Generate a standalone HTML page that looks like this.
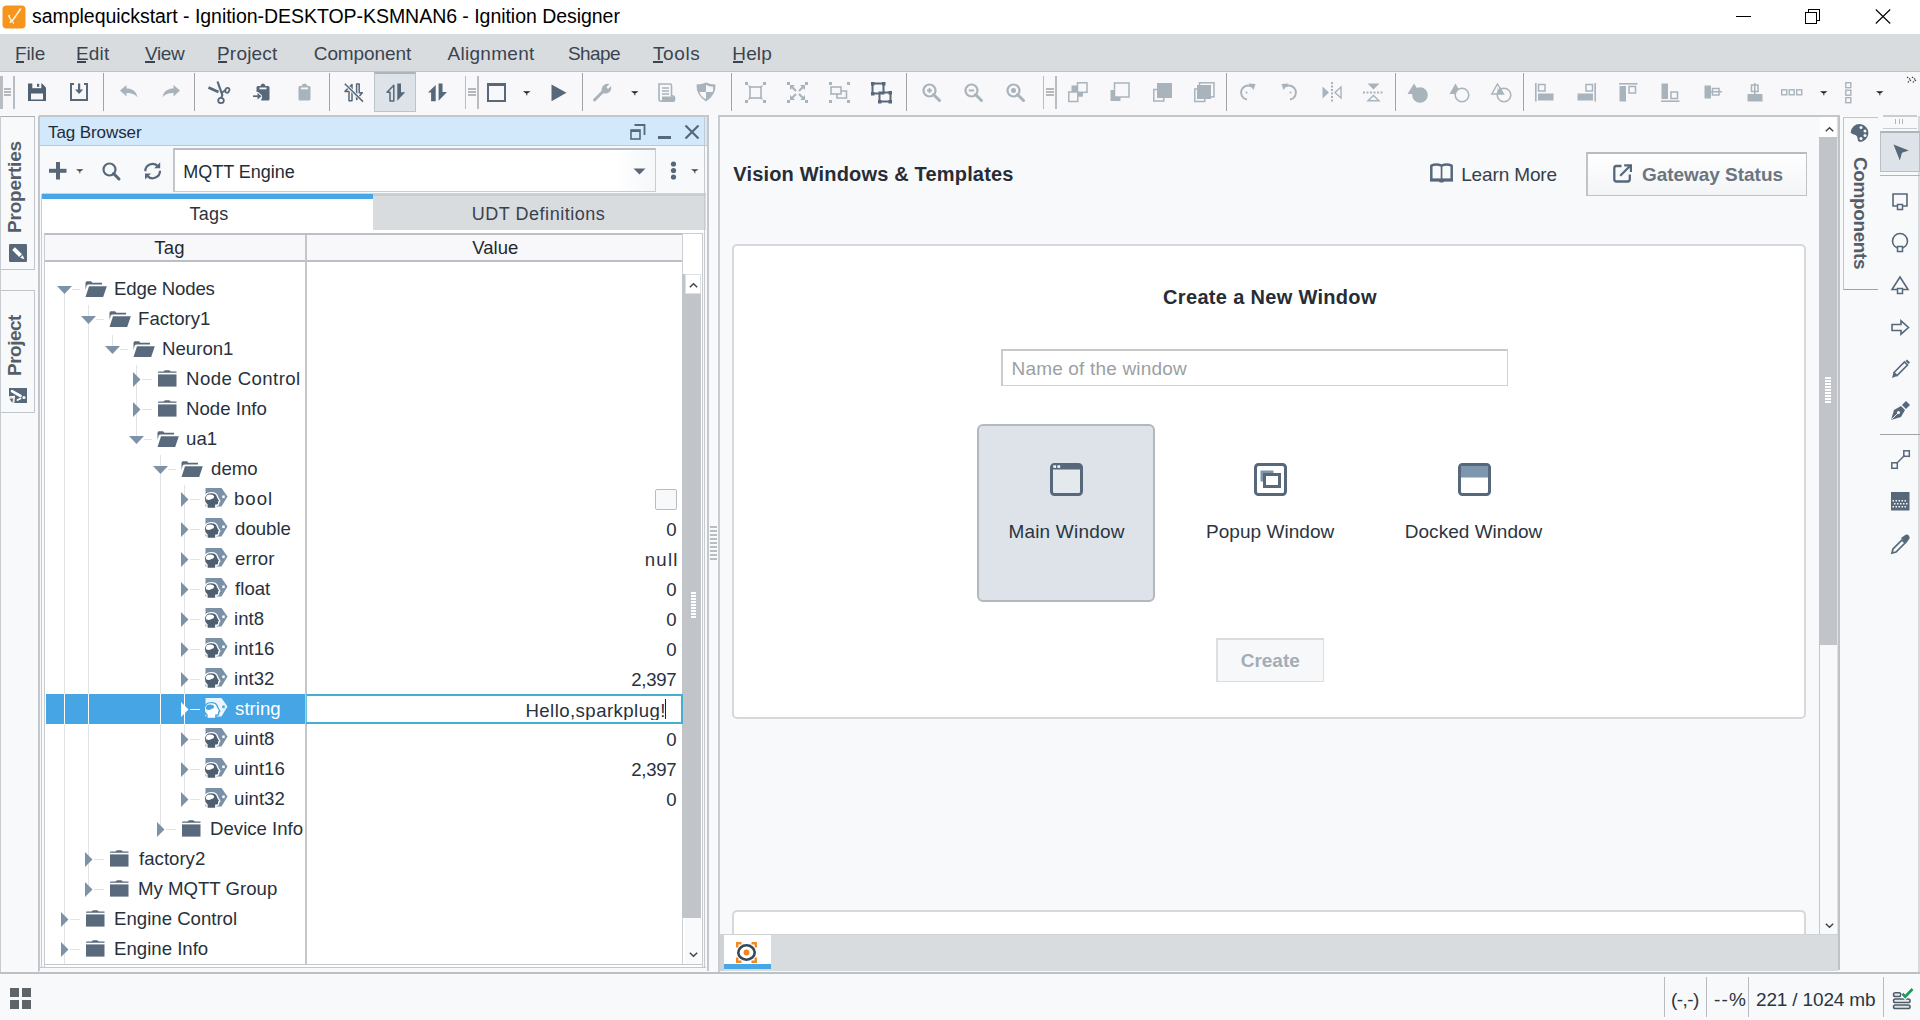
<!DOCTYPE html>
<html><head><meta charset="utf-8"><style>
html,body{margin:0;padding:0;}
body{width:1920px;height:1020px;position:relative;overflow:hidden;background:#f8f9fa;font-family:"Liberation Sans", sans-serif;}
.a{position:absolute;}
.t{white-space:pre;}
svg.a{overflow:visible;}
</style></head><body><div class="a" style="left:0px;top:0px;width:1920px;height:34px;background:#ffffff;"></div><svg class="a" style="left:2px;top:5px;" width="24" height="24" viewBox="0 0 24 24"><rect x="0.5" y="0.5" width="23" height="23" rx="4" fill="#f7941d"/><path d="M18.5 4 L10.5 15.5" stroke="#fff3d6" stroke-width="1.6" stroke-linecap="round"/><path d="M7 11.5 Q8 13.5 9.5 15.5 Q10 17 11.5 18 M9.5 15.5 L8 17.5" stroke="#fff3d6" stroke-width="1.4" fill="none" stroke-linecap="round"/><circle cx="7.2" cy="10.8" r="1" fill="#fff3d6"/></svg><div class="a t" style="left:32.00px;top:7.49px;font-size:19.5px;line-height:19.5px;color:#000000;letter-spacing:-0.038px;">samplequickstart - Ignition-DESKTOP-KSMNAN6 - Ignition Designer</div><div class="a" style="left:1736px;top:16px;width:15px;height:1px;background:#000;"></div><svg class="a" style="left:1805px;top:9px;" width="16" height="15" viewBox="0 0 16 15"><rect x="3.5" y="0.5" width="11" height="11" fill="none" stroke="#000" stroke-width="1"/><rect x="0.5" y="3.5" width="11" height="11" fill="#fff" stroke="#000" stroke-width="1"/></svg><svg class="a" style="left:1875px;top:9px;" width="16" height="15" viewBox="0 0 16 15"><path d="M0.8 0.5 L15.2 14.5 M15.2 0.5 L0.8 14.5" stroke="#000" stroke-width="1.1"/></svg><div class="a" style="left:0px;top:34px;width:1920px;height:37px;background:#d9dcdf;"></div><div class="a" style="left:0px;top:71px;width:1920px;height:2px;background:#bfc3c7;"></div><div class="a" style="left:0px;top:73px;width:1920px;height:2px;background:#fdfdfe;"></div><div class="a t" style="left:15.00px;top:43.92px;font-size:19px;line-height:19px;color:#3a4450;letter-spacing:-0.116px;">File</div><div class="a" style="left:16px;top:61px;width:8px;height:1.5px;background:#3a4450;"></div><div class="a t" style="left:76.00px;top:43.92px;font-size:19px;line-height:19px;color:#3a4450;letter-spacing:0.180px;">Edit</div><div class="a" style="left:77px;top:61px;width:9px;height:1.5px;background:#3a4450;"></div><div class="a t" style="left:145.00px;top:43.92px;font-size:19px;line-height:19px;color:#3a4450;letter-spacing:-0.373px;">View</div><div class="a" style="left:145px;top:61px;width:10px;height:1.5px;background:#3a4450;"></div><div class="a t" style="left:217.00px;top:43.92px;font-size:19px;line-height:19px;color:#3a4450;letter-spacing:0.191px;">Project</div><div class="a" style="left:218px;top:61px;width:9px;height:1.5px;background:#3a4450;"></div><div class="a t" style="left:313.75px;top:43.92px;font-size:19px;line-height:19px;color:#3a4450;letter-spacing:-0.087px;">Component</div><div class="a t" style="left:447.50px;top:43.92px;font-size:19px;line-height:19px;color:#3a4450;letter-spacing:0.286px;">Alignment</div><div class="a t" style="left:568.00px;top:43.92px;font-size:19px;line-height:19px;color:#3a4450;letter-spacing:-0.593px;">Shape</div><div class="a t" style="left:653.00px;top:43.92px;font-size:19px;line-height:19px;color:#3a4450;letter-spacing:0.599px;">Tools</div><div class="a" style="left:653px;top:61px;width:10px;height:1.5px;background:#3a4450;"></div><div class="a t" style="left:732.25px;top:43.92px;font-size:19px;line-height:19px;color:#3a4450;letter-spacing:0.164px;">Help</div><div class="a" style="left:733.25px;top:61px;width:10px;height:1.5px;background:#3a4450;"></div><div class="a" style="left:0px;top:72px;width:1920px;height:43px;background:#f8f8fa;"></div><div class="a" style="left:0px;top:75.7px;width:2.6px;height:33px;background:#b9bdc1;"></div><div class="a" style="left:3.5px;top:88px;width:7.5px;height:1.6px;background:#b4b8bc;"></div><div class="a" style="left:3.5px;top:91px;width:7.5px;height:1.6px;background:#b4b8bc;"></div><div class="a" style="left:3.5px;top:94px;width:7.5px;height:1.6px;background:#b4b8bc;"></div><div class="a" style="left:12.8px;top:75.7px;width:2px;height:33px;background:#b9bdc1;"></div><svg class="a" style="left:28px;top:83px;" width="18" height="18" viewBox="0 0 18 18"><path d="M0 0.5 H14 L18 4.5 V18 H0 Z" fill="#4f6173"/><rect x="4.3" y="0" width="9" height="5.2" fill="#f8f8fa"/><rect x="9" y="0.8" width="2.2" height="3" fill="#4f6173"/><rect x="3" y="10.5" width="12" height="6" fill="#f8f8fa"/></svg><svg class="a" style="left:70px;top:83px;" width="18" height="18" viewBox="0 0 18 18"><path d="M4 1 H1 V17 H17 V1 H14" fill="none" stroke="#56687a" stroke-width="2"/><rect x="8" y="0.5" width="2.2" height="7.5" fill="#56687a"/><path d="M5 6.5 H13.2 L9.1 11 Z" fill="#56687a"/></svg><div class="a" style="left:103px;top:73px;width:1px;height:38px;background:#9fa4a9;"></div><svg class="a" style="left:120px;top:85px;" width="18" height="13" viewBox="0 0 18 13"><path d="M0 5.5 L6.5 0 V3.5 C12 3.5 16.5 6 17.5 12.5 C15 9 11 8 6.5 8 V11.5 Z" fill="#a9b3bc"/></svg><svg class="a" style="left:161.5px;top:85px;" width="18" height="13" viewBox="0 0 18 13"><path d="M18 5.5 L11.5 0 V3.5 C6 3.5 1.5 6 0.5 12.5 C3 9 7 8 11.5 8 V11.5 Z" fill="#a9b3bc"/></svg><div class="a" style="left:194px;top:73px;width:1px;height:38px;background:#9fa4a9;"></div><svg class="a" style="left:208px;top:81px;" width="23" height="23" viewBox="0 0 23 23"><path d="M9.5 0.5 L14.5 14.5" stroke="#56687a" stroke-width="2.2"/><path d="M0.5 6.5 L10.5 11" stroke="#56687a" stroke-width="2.6"/><path d="M14.5 14 L13 17" stroke="#56687a" stroke-width="1.8"/><ellipse cx="13" cy="19.5" rx="2.8" ry="2.7" fill="none" stroke="#56687a" stroke-width="1.8"/><path d="M13.5 12 L18 8.8" stroke="#56687a" stroke-width="1.8"/><path d="M17 10 Q18 6 20.5 7 Q22.5 8.5 20.5 11 Q18.5 13 17 10 Z" fill="none" stroke="#56687a" stroke-width="1.8"/></svg><svg class="a" style="left:253px;top:83px;" width="17" height="18" viewBox="0 0 17 18"><path d="M5 3 H7.5 Q8 0.5 10 0.5 Q12 0.5 12.5 3 H15 Q16.5 3 16.5 4.5 V16 Q16.5 17.5 15 17.5 H8 L8.5 16 Q10 13.5 8 11.5 L5 9 Q4 8.5 3.5 9 V4.5 Q3.5 3 5 3 Z" fill="#56687a"/><path d="M6.5 4.5 H13.5 V6.3 H6.5 Z" fill="#f8f8fa"/><path d="M0 13.2 H5.5" stroke="#56687a" stroke-width="1.7"/><path d="M4.5 10 L8.5 13.2 L4.5 16.4 Z" fill="#56687a"/></svg><svg class="a" style="left:298px;top:83px;" width="13" height="18" viewBox="0 0 13 18"><path d="M1.5 3 H3.5 Q4 0.5 6.5 0.5 Q9 0.5 9.5 3 H11.5 Q12.5 3 12.5 4.5 V16 Q12.5 17.5 11 17.5 H2 Q0.5 17.5 0.5 16 V4.5 Q0.5 3 1.5 3 Z" fill="#a9b3bc"/><path d="M3 4.5 H10 V6.3 H3 Z" fill="#f8f8fa"/></svg><div class="a" style="left:328.5px;top:73px;width:1px;height:38px;background:#9fa4a9;"></div><svg class="a" style="left:344px;top:83px;" width="20" height="19" viewBox="0 0 20 19"><path d="M5 17.8 V8.4 H1 L8 1.5 V17.8 Z" fill="#f8f8fa" stroke="#56687a" stroke-width="1.5" stroke-linejoin="round"/><path d="M12.6 1 H15.2 V9.8 H18.3 L12.6 16.5 Z" fill="#f8f8fa" stroke="#56687a" stroke-width="1.5" stroke-linejoin="round"/><path d="M0.8 0.8 L19 18.6" stroke="#f8f8fa" stroke-width="3"/><path d="M0.8 0.8 L19 18.6" stroke="#56687a" stroke-width="1.5"/></svg><div class="a" style="left:374px;top:72px;width:42px;height:40px;background:#dde3e8;box-sizing:border-box;border:1px solid #bcc4cb;border-top:2px solid #adb5bc;"></div><svg class="a" style="left:386px;top:83px;" width="20" height="19" viewBox="0 0 20 19"><path d="M4 18 V9.3 H1 L7.8 2.2 V18 Z" fill="#dde3e8" stroke="#56687a" stroke-width="1.5" stroke-linejoin="round"/><path d="M11.3 0.4 H15 V9.2 H19.2 L11.3 17.8 Z" fill="#56687a"/></svg><svg class="a" style="left:428px;top:83px;" width="20" height="19" viewBox="0 0 20 19"><path d="M3.1 18.2 V9.5 H0 L7.7 1.9 V18.2 Z" fill="#56687a"/><path d="M10.6 0.4 H14.5 V9 H19 L10.6 17.8 Z" fill="#56687a"/></svg><div class="a" style="left:464.5px;top:75.5px;width:1.5px;height:33px;background:#b9bdc1;"></div><div class="a" style="left:468.0px;top:88px;width:7.5px;height:1.6px;background:#b4b8bc;"></div><div class="a" style="left:468.0px;top:91px;width:7.5px;height:1.6px;background:#b4b8bc;"></div><div class="a" style="left:468.0px;top:94px;width:7.5px;height:1.6px;background:#b4b8bc;"></div><div class="a" style="left:477.3px;top:75.7px;width:2px;height:33px;background:#b9bdc1;"></div><svg class="a" style="left:487px;top:83px;" width="19" height="19" viewBox="0 0 19 19"><rect x="1" y="1" width="17" height="17" fill="none" stroke="#56687a" stroke-width="2"/><rect x="1" y="1" width="17" height="2" fill="#56687a"/></svg><svg class="a" style="left:523px;top:91px;" width="8" height="5" viewBox="0 0 8 5"><path d="M0 0.2 H7.5 L3.75 3 Z" fill="#222"/><rect x="3.2" y="3" width="1.2" height="1.3" fill="#555"/></svg><svg class="a" style="left:551px;top:84px;" width="16" height="18" viewBox="0 0 16 18"><path d="M0.5 0.5 L15.5 8.8 L0.5 17.2 Z" fill="#56687a"/></svg><div class="a" style="left:581.5px;top:73px;width:1px;height:38px;background:#9fa4a9;"></div><svg class="a" style="left:593px;top:83px;" width="19" height="19" viewBox="0 0 19 19"><path d="M1.5 17 L10 8.5" stroke="#a9b3bc" stroke-width="3" stroke-linecap="round"/><path d="M9 9.5 Q7.5 5 11 2 Q13.5 0 16.5 1 L13.5 4 L15 6 L18 3 Q19 6.5 16.5 9 Q13.5 11.5 10 10 Z" fill="#a9b3bc"/></svg><svg class="a" style="left:630.5px;top:91px;" width="8" height="5" viewBox="0 0 8 5"><path d="M0 0.2 H7.5 L3.75 3 Z" fill="#222"/><rect x="3.2" y="3" width="1.2" height="1.3" fill="#555"/></svg><svg class="a" style="left:657px;top:83px;" width="18" height="19" viewBox="0 0 18 19"><path d="M2 1 H13 Q14.5 1 14.5 2.5 V13 H16.5 Q17.5 13 17.5 15 V17 Q17.5 18.2 16 18.2 H4 Q2 18.2 2 16 V1 Z" fill="none" stroke="#a9b3bc" stroke-width="1.6"/><path d="M5 5 H12 M5 8 H12 M5 11 H12" stroke="#a9b3bc" stroke-width="1.5"/><path d="M5 13.5 H17.5 V17 Q17.5 18.2 16 18.2 H5 Z" fill="#a9b3bc"/></svg><svg class="a" style="left:696px;top:82px;" width="20" height="20" viewBox="0 0 20 20"><path d="M10 0.5 Q14 2.5 19.5 2.5 Q20 13 10 19.5 Q0 13 0.5 2.5 Q6 2.5 10 0.5 Z" fill="#a9b3bc"/><path d="M10 3 Q13.5 4.5 17 4.7 Q17.5 8.3 16.6 10 H10 Z" fill="#f8f8fa"/><path d="M10 10 H3.4 Q5 14.8 10 17.2 Z" fill="#f8f8fa"/></svg><div class="a" style="left:730.5px;top:73px;width:1px;height:38px;background:#9fa4a9;"></div><svg class="a" style="left:745px;top:82px;" width="21" height="21" viewBox="0 0 21 21"><rect x="0" y="0" width="3" height="3" fill="#a9b3bc"/><rect x="0" y="18" width="3" height="3" fill="#a9b3bc"/><rect x="18" y="0" width="3" height="3" fill="#a9b3bc"/><rect x="18" y="18" width="3" height="3" fill="#a9b3bc"/><rect x="5" y="5" width="11" height="11" fill="none" stroke="#a9b3bc" stroke-width="1.6"/><path d="M3.5 3.5 L5.5 5.5 M17.5 3.5 L15.5 5.5 M3.5 17.5 L5.5 15.5 M17.5 17.5 L15.5 15.5" stroke="#a9b3bc" stroke-width="1.2"/></svg><svg class="a" style="left:787px;top:82px;" width="21" height="21" viewBox="0 0 21 21"><rect x="0" y="0" width="3" height="3" fill="#a9b3bc"/><rect x="0" y="18" width="3" height="3" fill="#a9b3bc"/><rect x="18" y="0" width="3" height="3" fill="#a9b3bc"/><rect x="18" y="18" width="3" height="3" fill="#a9b3bc"/><path d="M4 4 L9 9 M17 4 L12 9 M4 17 L9 12 M17 17 L12 12" stroke="#a9b3bc" stroke-width="2"/><path d="M3 3 H8 L3 8 Z M18 3 H13 L18 8 Z M3 18 H8 L3 13 Z M18 18 H13 L18 13 Z" fill="#a9b3bc"/></svg><svg class="a" style="left:829px;top:82px;" width="21" height="21" viewBox="0 0 21 21"><rect x="0" y="0" width="3" height="3" fill="#a9b3bc"/><rect x="0" y="18" width="3" height="3" fill="#a9b3bc"/><rect x="18" y="0" width="3" height="3" fill="#a9b3bc"/><rect x="18" y="18" width="3" height="3" fill="#a9b3bc"/><rect x="2" y="5" width="10" height="7" fill="none" stroke="#a9b3bc" stroke-width="1.6"/><path d="M12 9 H17.5 V16 H8 V12" fill="none" stroke="#a9b3bc" stroke-width="1.6"/></svg><svg class="a" style="left:871px;top:82px;" width="21" height="21" viewBox="0 0 21 21"><rect x="1.5" y="1.5" width="11" height="10" fill="none" stroke="#56687a" stroke-width="2"/><rect x="8.5" y="10.5" width="11" height="9" fill="none" stroke="#56687a" stroke-width="2"/><rect x="0" y="0" width="3.5" height="3.5" fill="#56687a"/><rect x="11" y="0" width="3.5" height="3.5" fill="#56687a"/><rect x="0" y="10" width="3.5" height="3.5" fill="#56687a"/><rect x="7" y="18" width="3.5" height="3.5" fill="#56687a"/><rect x="17.5" y="9" width="3.5" height="3.5" fill="#56687a"/><rect x="17.5" y="18" width="3.5" height="3.5" fill="#56687a"/></svg><div class="a" style="left:905.5px;top:73px;width:1px;height:38px;background:#9fa4a9;"></div><svg class="a" style="left:922px;top:83px;" width="19" height="19" viewBox="0 0 19 19"><circle cx="7.5" cy="7.5" r="6" fill="none" stroke="#a9b3bc" stroke-width="2.2"/><path d="M11.5 11.5 L17.5 17.5" stroke="#a9b3bc" stroke-width="3" stroke-linecap="round"/><path d="M5 7.5 H10 M7.5 5 V10" stroke="#a9b3bc" stroke-width="1.8"/></svg><svg class="a" style="left:964px;top:83px;" width="19" height="19" viewBox="0 0 19 19"><circle cx="7.5" cy="7.5" r="6" fill="none" stroke="#a9b3bc" stroke-width="2.2"/><path d="M11.5 11.5 L17.5 17.5" stroke="#a9b3bc" stroke-width="3" stroke-linecap="round"/><path d="M4.8 7.5 H10.2" stroke="#a9b3bc" stroke-width="2"/></svg><svg class="a" style="left:1006px;top:83px;" width="19" height="19" viewBox="0 0 19 19"><circle cx="7.5" cy="7.5" r="6" fill="none" stroke="#a9b3bc" stroke-width="2.2"/><path d="M11.5 11.5 L17.5 17.5" stroke="#a9b3bc" stroke-width="3" stroke-linecap="round"/><circle cx="7.5" cy="7.5" r="2.5" fill="#a9b3bc"/></svg><div class="a" style="left:1042.5px;top:75.5px;width:1.5px;height:33px;background:#b9bdc1;"></div><div class="a" style="left:1046.0px;top:88px;width:7.5px;height:1.6px;background:#b4b8bc;"></div><div class="a" style="left:1046.0px;top:91px;width:7.5px;height:1.6px;background:#b4b8bc;"></div><div class="a" style="left:1046.0px;top:94px;width:7.5px;height:1.6px;background:#b4b8bc;"></div><div class="a" style="left:1055.3px;top:75.7px;width:2px;height:33px;background:#b9bdc1;"></div><svg class="a" style="left:1068px;top:82px;" width="21" height="21" viewBox="0 0 21 21"><rect x="3.5" y="3.5" width="11" height="11" fill="#a9b3bc"/><rect x="9.5" y="0.8" width="9.5" height="9.5" fill="#f8f8fa" stroke="#a9b3bc" stroke-width="1.5"/><rect x="0.8" y="10" width="9" height="9.5" fill="#f8f8fa" stroke="#a9b3bc" stroke-width="1.5"/><rect x="10" y="10.5" width="5" height="4" fill="#a9b3bc"/></svg><svg class="a" style="left:1110px;top:82px;" width="20" height="21" viewBox="0 0 20 21"><rect x="0.5" y="8" width="10" height="11" fill="#a9b3bc"/><rect x="4.5" y="1" width="14.5" height="14" fill="#f8f8fa" stroke="#a9b3bc" stroke-width="1.5"/></svg><svg class="a" style="left:1153px;top:82px;" width="19" height="21" viewBox="0 0 19 21"><rect x="0.8" y="7.5" width="10" height="11.5" fill="#f8f8fa" stroke="#a9b3bc" stroke-width="1.5"/><rect x="4" y="1" width="15" height="15" fill="#a9b3bc"/></svg><svg class="a" style="left:1194px;top:82px;" width="21" height="21" viewBox="0 0 21 21"><rect x="5.5" y="0.8" width="14.5" height="14" fill="#f8f8fa" stroke="#a9b3bc" stroke-width="1.5"/><rect x="0.8" y="7" width="10" height="12.5" fill="#f8f8fa" stroke="#a9b3bc" stroke-width="1.5"/><rect x="3" y="3" width="14" height="14" fill="#a9b3bc"/></svg><div class="a" style="left:1225.5px;top:73px;width:1px;height:38px;background:#9fa4a9;"></div><svg class="a" style="left:1238px;top:83px;" width="18" height="19" viewBox="0 0 18 19"><path d="M13.5 3.5 A7 7 0 1 0 9 16.5" fill="none" stroke="#a9b3bc" stroke-width="2"/><path d="M10.5 0.5 L17.5 1 L15.5 7 Z" fill="#a9b3bc"/><circle cx="8.5" cy="9.5" r="1" fill="#a9b3bc"/></svg><svg class="a" style="left:1281px;top:83px;" width="18" height="19" viewBox="0 0 18 19"><path d="M4.5 3.5 A7 7 0 1 1 9 16.5" fill="none" stroke="#a9b3bc" stroke-width="2"/><path d="M7.5 0.5 L0.5 1 L2.5 7 Z" fill="#a9b3bc"/><circle cx="9.5" cy="9.5" r="1" fill="#a9b3bc"/></svg><svg class="a" style="left:1322px;top:82px;" width="20" height="21" viewBox="0 0 20 21"><path d="M0.5 4.5 L7 10.5 L0.5 16.5 Z" fill="#a9b3bc"/><path d="M19 5 L13 10.5 L19 16 Z" fill="none" stroke="#a9b3bc" stroke-width="1.4"/><rect x="9" y="0" width="2" height="2" fill="#a9b3bc"/><rect x="9" y="3.5" width="2" height="2" fill="#a9b3bc"/><rect x="9" y="7" width="2" height="2" fill="#a9b3bc"/><rect x="9" y="10.5" width="2" height="2" fill="#a9b3bc"/><rect x="9" y="14" width="2" height="2" fill="#a9b3bc"/><rect x="9" y="17.5" width="2" height="2" fill="#a9b3bc"/></svg><svg class="a" style="left:1363px;top:83px;" width="21" height="19" viewBox="0 0 21 19"><path d="M4.5 0.5 L10.5 6.5 L16.5 0.5 Z" fill="#a9b3bc"/><path d="M5 17.8 L10.5 12.5 L16 17.8 Z" fill="none" stroke="#a9b3bc" stroke-width="1.4"/><rect x="0" y="8.5" width="2" height="2" fill="#a9b3bc"/><rect x="3.5" y="8.5" width="2" height="2" fill="#a9b3bc"/><rect x="7" y="8.5" width="2" height="2" fill="#a9b3bc"/><rect x="10.5" y="8.5" width="2" height="2" fill="#a9b3bc"/><rect x="14" y="8.5" width="2" height="2" fill="#a9b3bc"/><rect x="17.5" y="8.5" width="2" height="2" fill="#a9b3bc"/></svg><div class="a" style="left:1394.5px;top:73px;width:1px;height:38px;background:#9fa4a9;"></div><svg class="a" style="left:1407px;top:83px;" width="22" height="21" viewBox="0 0 22 21"><path d="M7 0.5 L13.5 11 H0.5 Z" fill="#a9b3bc"/><circle cx="13" cy="12" r="7.8" fill="#a9b3bc"/></svg><svg class="a" style="left:1449px;top:83px;" width="21" height="21" viewBox="0 0 21 21"><path d="M6.5 0.5 L12.5 11 H0.5 Z" fill="#a9b3bc"/><circle cx="13" cy="12" r="6.8" fill="#f8f8fa" stroke="#a9b3bc" stroke-width="1.5"/></svg><svg class="a" style="left:1491px;top:83px;" width="21" height="21" viewBox="0 0 21 21"><path d="M6.5 1 L12.5 11 H0.8 Z" fill="none" stroke="#a9b3bc" stroke-width="1.4"/><circle cx="13" cy="12" r="6.8" fill="none" stroke="#a9b3bc" stroke-width="1.5"/><path d="M6.5 5 L11.5 11 H6.5 Z" fill="#a9b3bc"/><path d="M9 3.5 L12.5 11 H6.3 Z" fill="#a9b3bc"/></svg><div class="a" style="left:1522.5px;top:73px;width:1px;height:38px;background:#9fa4a9;"></div><svg class="a" style="left:1535px;top:83px;" width="19" height="19" viewBox="0 0 19 19"><rect x="0" y="0" width="1.6" height="18.5" fill="#a9b3bc"/><rect x="3.5" y="1.5" width="6.5" height="6.5" fill="none" stroke="#a9b3bc" stroke-width="1.5"/><rect x="3" y="10.5" width="15.5" height="7" fill="#a9b3bc"/></svg><svg class="a" style="left:1577px;top:83px;" width="19" height="19" viewBox="0 0 19 19"><rect x="17.4" y="0" width="1.6" height="18.5" fill="#a9b3bc"/><rect x="9" y="1.5" width="6.5" height="6.5" fill="none" stroke="#a9b3bc" stroke-width="1.5"/><rect x="0.5" y="10.5" width="15.5" height="7" fill="#a9b3bc"/></svg><svg class="a" style="left:1619px;top:83px;" width="19" height="19" viewBox="0 0 19 19"><rect x="0" y="0" width="18.5" height="1.6" fill="#a9b3bc"/><rect x="0.5" y="3" width="6.5" height="15.5" fill="#a9b3bc"/><rect x="10" y="3.5" width="6.5" height="6.5" fill="none" stroke="#a9b3bc" stroke-width="1.5"/></svg><svg class="a" style="left:1661px;top:83px;" width="19" height="19" viewBox="0 0 19 19"><rect x="0" y="17.4" width="18.5" height="1.6" fill="#a9b3bc"/><rect x="0.5" y="0.5" width="6.5" height="15.5" fill="#a9b3bc"/><rect x="10" y="9" width="6.5" height="6.5" fill="none" stroke="#a9b3bc" stroke-width="1.5"/></svg><svg class="a" style="left:1704px;top:85px;" width="18" height="14" viewBox="0 0 18 14"><rect x="0.5" y="0.5" width="6.5" height="13" fill="#a9b3bc"/><rect x="8.5" y="3.5" width="6.5" height="6.5" fill="none" stroke="#a9b3bc" stroke-width="1.5"/><rect x="7" y="6" width="11" height="1.5" fill="#a9b3bc"/></svg><svg class="a" style="left:1747px;top:83px;" width="16" height="19" viewBox="0 0 16 19"><rect x="0.5" y="11" width="15" height="7.5" fill="#a9b3bc"/><rect x="4.5" y="2" width="6.5" height="6.5" fill="none" stroke="#a9b3bc" stroke-width="1.5"/><rect x="7" y="0" width="1.5" height="11" fill="#a9b3bc"/></svg><svg class="a" style="left:1781px;top:89px;" width="22" height="7" viewBox="0 0 22 7"><rect x="0.7" y="0.8" width="5" height="5" fill="none" stroke="#a9b3bc" stroke-width="1.4"/><rect x="8.2" y="0.8" width="5" height="5" fill="none" stroke="#a9b3bc" stroke-width="1.4"/><rect x="15.7" y="0.8" width="5" height="5" fill="none" stroke="#a9b3bc" stroke-width="1.4"/></svg><svg class="a" style="left:1819.5px;top:91px;" width="8" height="5" viewBox="0 0 8 5"><path d="M0 0.2 H7.5 L3.75 3 Z" fill="#222"/><rect x="3.2" y="3" width="1.2" height="1.3" fill="#555"/></svg><svg class="a" style="left:1845px;top:82px;" width="8" height="22" viewBox="0 0 8 22"><rect x="0.8" y="0.7" width="5" height="5" fill="none" stroke="#a9b3bc" stroke-width="1.4"/><rect x="0.8" y="8.2" width="5" height="5" fill="none" stroke="#a9b3bc" stroke-width="1.4"/><rect x="0.8" y="15.7" width="5" height="5" fill="none" stroke="#a9b3bc" stroke-width="1.4"/></svg><svg class="a" style="left:1876px;top:91px;" width="8" height="5" viewBox="0 0 8 5"><path d="M0 0.2 H7.5 L3.75 3 Z" fill="#222"/><rect x="3.2" y="3" width="1.2" height="1.3" fill="#555"/></svg><svg class="a" style="left:1906px;top:76px;" width="13" height="9" viewBox="0 0 13 9"><path d="M1 1 L5 4 L1 7 M6 1 L10 4 L6 7" fill="none" stroke="#333" stroke-width="1.1" stroke-dasharray="1.5 1"/></svg><div class="a" style="left:0px;top:116px;width:1px;height:858px;background:#c8ccd0;"></div><div class="a" style="left:1px;top:116px;width:34px;height:154px;background:#f8f9fa;box-sizing:border-box;border:1px solid #c2c6ca;border-left:none;border-top-color:#a9aeb3;"></div><div class="a t" style="transform-origin:0 0;transform:rotate(-90deg);left:5.22px;top:233.20px;font-size:19px;line-height:19px;color:#555e68;font-weight:bold;letter-spacing:-0.213px;">Properties</div><svg class="a" style="left:8.5px;top:244px;" width="18" height="18" viewBox="0 0 18 18"><rect x="0" y="0" width="18" height="18" rx="1.2" fill="#56687a"/><path d="M3.2 6 L6 3.2 L13 10.2 L10.2 13 Z" fill="#ffffff"/><path d="M11.2 13.8 L13.8 11.2 L15.3 15.3 Z" fill="#ffffff"/></svg><div class="a" style="left:1px;top:290px;width:34px;height:123px;background:#f8f9fa;box-sizing:border-box;border:1px solid #c2c6ca;border-left:none;"></div><div class="a t" style="transform-origin:0 0;transform:rotate(-90deg);left:5.22px;top:375.50px;font-size:19px;line-height:19px;color:#555e68;font-weight:bold;letter-spacing:-0.514px;">Project</div><svg class="a" style="left:8.5px;top:388px;" width="18" height="15" viewBox="0 0 18 15"><path d="M0 0 H18 V15 H4.2 L5 9 L0 9.5 Z" fill="#56687a"/><path d="M0.5 10.8 L4 10.6 L3.4 15 Z" fill="#56687a"/><path d="M0 9 L5.3 8.6 L4.6 15" fill="none" stroke="#f8f9fa" stroke-width="1.4"/><path d="M3 3.2 L11.5 8" stroke="#ffffff" stroke-width="2.6" stroke-linecap="round"/><circle cx="15" cy="9.5" r="1.6" fill="#ffffff"/><path d="M8.5 12 L11.5 10.5" stroke="#ffffff" stroke-width="1.8" stroke-linecap="round"/></svg><div class="a" style="left:38px;top:116px;width:1px;height:858px;background:#c3c7cb;"></div><div class="a" style="left:39px;top:115px;width:670px;height:856px;background:#f8f9fa;box-sizing:border-box;border:1px solid #c4c8cc;border-top:2px solid #c3c6ca;border-right:2px solid #c4c8cc;border-bottom:none;"></div><div class="a" style="left:40px;top:117px;width:667px;height:28px;background:#d2e9fb;"></div><div class="a" style="left:40px;top:145px;width:667px;height:1px;background:#bfc7cf;"></div><div class="a t" style="left:48.10px;top:124.11px;font-size:17px;line-height:17px;color:#1f2b3a;letter-spacing:-0.102px;">Tag Browser</div><svg class="a" style="left:630px;top:124px;" width="16" height="16" viewBox="0 0 16 16"><rect x="1" y="6" width="9" height="9" fill="none" stroke="#56687a" stroke-width="1.6"/><rect x="1" y="6" width="9" height="2" fill="#56687a"/><path d="M4.5 1 H14.5 V11" fill="none" stroke="#56687a" stroke-width="1.8"/></svg><div class="a" style="left:658px;top:136px;width:12.5px;height:3px;background:#56687a;"></div><svg class="a" style="left:684px;top:124px;" width="16" height="16" viewBox="0 0 16 16"><path d="M1.5 1.5 L14.5 14.5 M14.5 1.5 L1.5 14.5" stroke="#56687a" stroke-width="2.2"/></svg><div class="a" style="left:173.2px;top:147.8px;width:482.5px;height:44.5px;background:#ffffff;box-sizing:border-box;border:1px solid #c9ccd0;border-top:2px solid #b9bdc1;border-left:2px solid #c2c6ca;"></div><div class="a" style="left:615px;top:149.8px;width:39.5px;height:41.2px;background:linear-gradient(90deg,#ffffff,#f5f7f9);"></div><svg class="a" style="left:49px;top:161.5px;" width="18" height="18" viewBox="0 0 18 18"><rect x="7" y="0" width="4" height="17.5" fill="#56687a"/><rect x="0" y="6.8" width="17.5" height="4" fill="#56687a"/></svg><svg class="a" style="left:76px;top:168.5px;" width="8" height="5" viewBox="0 0 8 5"><path d="M0 0.2 H7.5 L3.75 3 Z" fill="#444"/><rect x="3.2" y="3" width="1.2" height="1.3" fill="#666"/></svg><svg class="a" style="left:102px;top:162px;" width="19" height="19" viewBox="0 0 19 19"><circle cx="7.5" cy="7.5" r="6" fill="none" stroke="#56687a" stroke-width="2.2"/><path d="M11.5 11.5 L17 17" stroke="#56687a" stroke-width="3" stroke-linecap="round"/></svg><svg class="a" style="left:144px;top:162px;" width="18" height="18" viewBox="0 0 18 18"><path d="M1.3 9.2 A7.3 7.3 0 0 1 13.6 3.9" fill="none" stroke="#56687a" stroke-width="2.2"/><path d="M16.2 0.2 V6.2 H10.2 Z" fill="#56687a"/><path d="M16 8.8 A7.3 7.3 0 0 1 3.6 14.1" fill="none" stroke="#56687a" stroke-width="2.2"/><path d="M1 17.6 V11.6 H7 Z" fill="#56687a"/></svg><svg class="a" style="left:633px;top:168px;" width="13" height="7" viewBox="0 0 13 7"><path d="M0.5 0.5 H12.5 L6.5 6.5 Z" fill="#56687a"/></svg><svg class="a" style="left:670px;top:160.5px;" width="7" height="19" viewBox="0 0 7 19"><circle cx="3.5" cy="3" r="2.6" fill="#56687a"/><circle cx="3.5" cy="9.5" r="2.6" fill="#56687a"/><circle cx="3.5" cy="16" r="2.6" fill="#56687a"/></svg><svg class="a" style="left:691px;top:168.5px;" width="8" height="5" viewBox="0 0 8 5"><path d="M0 0.2 H7.5 L3.75 3 Z" fill="#444"/><rect x="3.2" y="3" width="1.2" height="1.3" fill="#666"/></svg><div class="a t" style="left:183.20px;top:162.66px;font-size:18px;line-height:18px;color:#222c38;letter-spacing:-0.012px;">MQTT Engine</div><div class="a" style="left:42px;top:193px;width:664px;height:1px;background:#d0d3d6;"></div><div class="a" style="left:42px;top:194px;width:331px;height:4.5px;background:#46a6e6;"></div><div class="a" style="left:42px;top:198.5px;width:331px;height:31.5px;background:#ffffff;"></div><div class="a" style="left:373px;top:194px;width:333px;height:36px;background:#d9dcdf;box-sizing:border-box;border-top:2px solid #c9ccd0;"></div><div class="a" style="left:41px;top:194px;width:1px;height:774px;background:#c9ccd0;"></div><div class="a" style="left:42px;top:230px;width:664px;height:3px;background:#ffffff;"></div><div class="a t" style="left:189.40px;top:204.56px;font-size:18px;line-height:18px;color:#2c3540;letter-spacing:0.293px;">Tags</div><div class="a t" style="left:471.80px;top:204.76px;font-size:18px;line-height:18px;color:#38424d;letter-spacing:0.519px;">UDT Definitions</div><div class="a" style="left:44px;top:233px;width:659px;height:735px;background:#ffffff;box-sizing:border-box;border:1px solid #c9ccd0;"></div><div class="a" style="left:45px;top:233px;width:637px;height:2px;background:#bcc0c4;"></div><div class="a" style="left:45px;top:235px;width:637px;height:25px;background:#f8f8fa;"></div><div class="a" style="left:45px;top:260px;width:637px;height:2px;background:#bcc0c4;"></div><div class="a" style="left:305px;top:235px;width:2px;height:729px;background:#c3c7cb;"></div><div class="a t" style="left:154.20px;top:239.34px;font-size:18.5px;line-height:18.5px;color:#1f2933;letter-spacing:0.231px;">Tag</div><div class="a t" style="left:472.30px;top:239.34px;font-size:18.5px;line-height:18.5px;color:#1f2933;letter-spacing:0.011px;">Value</div><div class="a" style="left:682px;top:235px;width:20px;height:39px;background:#ffffff;"></div><div class="a" style="left:682px;top:234px;width:1px;height:730px;background:#cdd0d3;"></div><div class="a" style="left:682px;top:274px;width:3px;height:20px;background:#c1c5c9;"></div><div class="a" style="left:682px;top:293.5px;width:19px;height:624px;background:#c1c5c9;"></div><div class="a" style="left:685px;top:274px;width:16px;height:19.5px;background:#ffffff;box-sizing:border-box;border:1px solid #dde0e3;"></div><svg class="a" style="left:688.5px;top:283px;" width="9" height="5" viewBox="0 0 9 5"><path d="M0.8 4.2 L4.5 0.8 L8.2 4.2" fill="none" stroke="#444" stroke-width="1.5"/></svg><div class="a" style="left:685px;top:917.5px;width:16px;height:46.5px;background:#f9fafb;"></div><svg class="a" style="left:688.5px;top:952px;" width="9" height="5" viewBox="0 0 9 5"><path d="M0.8 0.8 L4.5 4.2 L8.2 0.8" fill="none" stroke="#444" stroke-width="1.5"/></svg><div class="a" style="left:690.5px;top:592px;width:5.5px;height:1.6px;background:#ffffff;"></div><div class="a" style="left:690.5px;top:595px;width:5.5px;height:1.6px;background:#ffffff;"></div><div class="a" style="left:690.5px;top:598px;width:5.5px;height:1.6px;background:#ffffff;"></div><div class="a" style="left:690.5px;top:601px;width:5.5px;height:1.6px;background:#ffffff;"></div><div class="a" style="left:690.5px;top:604px;width:5.5px;height:1.6px;background:#ffffff;"></div><div class="a" style="left:690.5px;top:607px;width:5.5px;height:1.6px;background:#ffffff;"></div><div class="a" style="left:690.5px;top:610px;width:5.5px;height:1.6px;background:#ffffff;"></div><div class="a" style="left:690.5px;top:613px;width:5.5px;height:1.6px;background:#ffffff;"></div><div class="a" style="left:690.5px;top:616px;width:5.5px;height:1.6px;background:#ffffff;"></div><div class="a" style="left:701.5px;top:235px;width:1px;height:730px;background:#c7cbcf;"></div><div class="a" style="left:704px;top:116px;width:1px;height:852px;background:#c7cbcf;"></div><div class="a" style="left:45px;top:964px;width:657px;height:1px;background:#c3c7cb;"></div><div class="a" style="left:40px;top:967px;width:666px;height:1px;background:#c3c7cb;"></div><div class="a" style="left:46px;top:694px;width:259px;height:29.5px;background:#45a5e5;"></div><div class="a" style="left:64.0px;top:289.5px;width:1px;height:674.5px;background:#e1e4e7;"></div><div class="a" style="left:64.0px;top:694px;width:1px;height:29.5px;background:#ffffff;"></div><div class="a" style="left:88.0px;top:304.5px;width:1px;height:585.0px;background:#e1e4e7;"></div><div class="a" style="left:88.0px;top:694px;width:1px;height:29.5px;background:#ffffff;"></div><div class="a" style="left:112.0px;top:334.5px;width:1px;height:15.0px;background:#e1e4e7;"></div><div class="a" style="left:136.0px;top:364.5px;width:1px;height:75.0px;background:#e1e4e7;"></div><div class="a" style="left:160.0px;top:454.5px;width:1px;height:375.0px;background:#e1e4e7;"></div><div class="a" style="left:160.0px;top:694px;width:1px;height:29.5px;background:#ffffff;"></div><div class="a" style="left:184.0px;top:484.5px;width:1px;height:315.0px;background:#e1e4e7;"></div><div class="a" style="left:184.0px;top:694px;width:1px;height:29.5px;background:#ffffff;"></div><div class="a" style="left:72.0px;top:289.0px;width:8px;height:1px;background:#e1e4e7;"></div><svg class="a" style="left:57.0px;top:285.5px;" width="15" height="8" viewBox="0 0 15 8"><path d="M0 0 H15 L7.5 8 Z" fill="#7d92a7"/></svg><svg class="a" style="left:84.8px;top:280.6px;" width="22" height="16" viewBox="0 0 22 16"><path d="M0.5 2 Q0.5 0.3 2 0.3 H6 L7.5 1.8 H17 V3.4 H3.2 Q1.8 3.4 1.5 5 L0.5 9 Z" fill="#586a7c"/><path d="M4 5.2 H21.8 L18.2 16 H0.5 Z" fill="#586a7c"/></svg><div class="a t" style="left:114.10px;top:279.56px;font-size:18.6px;line-height:18.6px;color:#28313c;letter-spacing:-0.171px;">Edge Nodes</div><div class="a" style="left:96.0px;top:319.0px;width:8px;height:1px;background:#e1e4e7;"></div><svg class="a" style="left:81.0px;top:315.5px;" width="15" height="8" viewBox="0 0 15 8"><path d="M0 0 H15 L7.5 8 Z" fill="#7d92a7"/></svg><svg class="a" style="left:108.8px;top:310.6px;" width="22" height="16" viewBox="0 0 22 16"><path d="M0.5 2 Q0.5 0.3 2 0.3 H6 L7.5 1.8 H17 V3.4 H3.2 Q1.8 3.4 1.5 5 L0.5 9 Z" fill="#586a7c"/><path d="M4 5.2 H21.8 L18.2 16 H0.5 Z" fill="#586a7c"/></svg><div class="a t" style="left:138.10px;top:309.56px;font-size:18.6px;line-height:18.6px;color:#28313c;">Factory1</div><div class="a" style="left:120.0px;top:349.0px;width:8px;height:1px;background:#e1e4e7;"></div><svg class="a" style="left:105.0px;top:345.5px;" width="15" height="8" viewBox="0 0 15 8"><path d="M0 0 H15 L7.5 8 Z" fill="#7d92a7"/></svg><svg class="a" style="left:132.8px;top:340.6px;" width="22" height="16" viewBox="0 0 22 16"><path d="M0.5 2 Q0.5 0.3 2 0.3 H6 L7.5 1.8 H17 V3.4 H3.2 Q1.8 3.4 1.5 5 L0.5 9 Z" fill="#586a7c"/><path d="M4 5.2 H21.8 L18.2 16 H0.5 Z" fill="#586a7c"/></svg><div class="a t" style="left:162.10px;top:339.56px;font-size:18.6px;line-height:18.6px;color:#28313c;">Neuron1</div><div class="a" style="left:142.0px;top:379.0px;width:10px;height:1px;background:#e1e4e7;"></div><svg class="a" style="left:133.0px;top:372.0px;" width="8" height="15" viewBox="0 0 8 15"><path d="M0 0 L7.5 7.5 L0 15 Z" fill="#7d92a7"/></svg><svg class="a" style="left:158.0px;top:370.3px;" width="19" height="17" viewBox="0 0 19 17"><path d="M0 2.2 Q0 1.5 1 1.4 H5.5 Q6.5 0.2 8 0.2 H10.5 Q12 0.2 12.8 1.4 H18.5 V2.8 H0 Z" fill="#586a7c"/><rect x="0" y="4.4" width="18.5" height="12.2" fill="#586a7c"/></svg><div class="a t" style="left:186.10px;top:369.56px;font-size:18.6px;line-height:18.6px;color:#28313c;letter-spacing:0.407px;">Node Control</div><div class="a" style="left:142.0px;top:409.0px;width:10px;height:1px;background:#e1e4e7;"></div><svg class="a" style="left:133.0px;top:402.0px;" width="8" height="15" viewBox="0 0 8 15"><path d="M0 0 L7.5 7.5 L0 15 Z" fill="#7d92a7"/></svg><svg class="a" style="left:158.0px;top:400.3px;" width="19" height="17" viewBox="0 0 19 17"><path d="M0 2.2 Q0 1.5 1 1.4 H5.5 Q6.5 0.2 8 0.2 H10.5 Q12 0.2 12.8 1.4 H18.5 V2.8 H0 Z" fill="#586a7c"/><rect x="0" y="4.4" width="18.5" height="12.2" fill="#586a7c"/></svg><div class="a t" style="left:186.10px;top:399.56px;font-size:18.6px;line-height:18.6px;color:#28313c;">Node Info</div><div class="a" style="left:144.0px;top:439.0px;width:8px;height:1px;background:#e1e4e7;"></div><svg class="a" style="left:129.0px;top:435.5px;" width="15" height="8" viewBox="0 0 15 8"><path d="M0 0 H15 L7.5 8 Z" fill="#7d92a7"/></svg><svg class="a" style="left:156.8px;top:430.6px;" width="22" height="16" viewBox="0 0 22 16"><path d="M0.5 2 Q0.5 0.3 2 0.3 H6 L7.5 1.8 H17 V3.4 H3.2 Q1.8 3.4 1.5 5 L0.5 9 Z" fill="#586a7c"/><path d="M4 5.2 H21.8 L18.2 16 H0.5 Z" fill="#586a7c"/></svg><div class="a t" style="left:186.10px;top:429.56px;font-size:18.6px;line-height:18.6px;color:#28313c;">ua1</div><div class="a" style="left:168.0px;top:469.0px;width:8px;height:1px;background:#e1e4e7;"></div><svg class="a" style="left:153.0px;top:465.5px;" width="15" height="8" viewBox="0 0 15 8"><path d="M0 0 H15 L7.5 8 Z" fill="#7d92a7"/></svg><svg class="a" style="left:180.8px;top:460.6px;" width="22" height="16" viewBox="0 0 22 16"><path d="M0.5 2 Q0.5 0.3 2 0.3 H6 L7.5 1.8 H17 V3.4 H3.2 Q1.8 3.4 1.5 5 L0.5 9 Z" fill="#586a7c"/><path d="M4 5.2 H21.8 L18.2 16 H0.5 Z" fill="#586a7c"/></svg><div class="a t" style="left:211.10px;top:459.56px;font-size:18.6px;line-height:18.6px;color:#28313c;">demo</div><div class="a" style="left:190.0px;top:499.0px;width:10px;height:1px;background:#e1e4e7;"></div><svg class="a" style="left:181.0px;top:492.0px;" width="8" height="15" viewBox="0 0 8 15"><path d="M0 0 L7.5 7.5 L0 15 Z" fill="#7d92a7"/></svg><svg class="a" style="left:203.5px;top:488.0px;" width="24" height="21" viewBox="0 0 24 21"><path d="M1.5 0 H17.5 L23.5 8.5 L17.5 18.5 H1.5 Z" fill="#7a90a6"/><rect x="18.3" y="7.5" width="2.4" height="2.6" fill="#ffffff"/><path d="M3 20.5 V16.8 Q0 14.5 0.3 10.8 Q0.8 4.6 7.2 4.6 Q12.8 4.6 13.8 9.5 L15.8 13 Q16 13.8 14.6 14 V16 Q14.3 17.5 12.5 17.2 H11.8 V20.5 Z" fill="#4d5f71" stroke="#ffffff" stroke-width="1.3"/><path d="M1.9 10.5 Q1.8 6.6 6 6.5 Q9.5 6.3 10.2 8.6 Q10.2 10.8 7.5 11 Q5.5 12.3 3.5 11.8 Q2 11.7 1.9 10.5 Z" fill="#ffffff"/></svg><div class="a t" style="left:234.10px;top:489.56px;font-size:18.6px;line-height:18.6px;color:#28313c;letter-spacing:0.926px;">bool</div><div class="a" style="left:655px;top:488.5px;width:21.5px;height:21.5px;background:#f8f9fa;box-sizing:border-box;border:1px solid #b9bdc1;border-radius:2px;"></div><div class="a" style="left:190.0px;top:529.0px;width:10px;height:1px;background:#e1e4e7;"></div><svg class="a" style="left:181.0px;top:522.0px;" width="8" height="15" viewBox="0 0 8 15"><path d="M0 0 L7.5 7.5 L0 15 Z" fill="#7d92a7"/></svg><svg class="a" style="left:203.5px;top:518.0px;" width="24" height="21" viewBox="0 0 24 21"><path d="M1.5 0 H17.5 L23.5 8.5 L17.5 18.5 H1.5 Z" fill="#7a90a6"/><rect x="18.3" y="7.5" width="2.4" height="2.6" fill="#ffffff"/><path d="M3 20.5 V16.8 Q0 14.5 0.3 10.8 Q0.8 4.6 7.2 4.6 Q12.8 4.6 13.8 9.5 L15.8 13 Q16 13.8 14.6 14 V16 Q14.3 17.5 12.5 17.2 H11.8 V20.5 Z" fill="#4d5f71" stroke="#ffffff" stroke-width="1.3"/><path d="M1.9 10.5 Q1.8 6.6 6 6.5 Q9.5 6.3 10.2 8.6 Q10.2 10.8 7.5 11 Q5.5 12.3 3.5 11.8 Q2 11.7 1.9 10.5 Z" fill="#ffffff"/></svg><div class="a t" style="left:235.10px;top:519.56px;font-size:18.6px;line-height:18.6px;color:#28313c;">double</div><div class="a t" style="left:666.30px;top:520.56px;font-size:18.6px;line-height:18.6px;color:#28313c;">0</div><div class="a" style="left:190.0px;top:559.0px;width:10px;height:1px;background:#e1e4e7;"></div><svg class="a" style="left:181.0px;top:552.0px;" width="8" height="15" viewBox="0 0 8 15"><path d="M0 0 L7.5 7.5 L0 15 Z" fill="#7d92a7"/></svg><svg class="a" style="left:203.5px;top:548.0px;" width="24" height="21" viewBox="0 0 24 21"><path d="M1.5 0 H17.5 L23.5 8.5 L17.5 18.5 H1.5 Z" fill="#7a90a6"/><rect x="18.3" y="7.5" width="2.4" height="2.6" fill="#ffffff"/><path d="M3 20.5 V16.8 Q0 14.5 0.3 10.8 Q0.8 4.6 7.2 4.6 Q12.8 4.6 13.8 9.5 L15.8 13 Q16 13.8 14.6 14 V16 Q14.3 17.5 12.5 17.2 H11.8 V20.5 Z" fill="#4d5f71" stroke="#ffffff" stroke-width="1.3"/><path d="M1.9 10.5 Q1.8 6.6 6 6.5 Q9.5 6.3 10.2 8.6 Q10.2 10.8 7.5 11 Q5.5 12.3 3.5 11.8 Q2 11.7 1.9 10.5 Z" fill="#ffffff"/></svg><div class="a t" style="left:235.10px;top:549.56px;font-size:18.6px;line-height:18.6px;color:#28313c;">error</div><div class="a t" style="left:644.80px;top:550.56px;font-size:18.6px;line-height:18.6px;color:#28313c;letter-spacing:1.229px;">null</div><div class="a" style="left:190.0px;top:589.0px;width:10px;height:1px;background:#e1e4e7;"></div><svg class="a" style="left:181.0px;top:582.0px;" width="8" height="15" viewBox="0 0 8 15"><path d="M0 0 L7.5 7.5 L0 15 Z" fill="#7d92a7"/></svg><svg class="a" style="left:203.5px;top:578.0px;" width="24" height="21" viewBox="0 0 24 21"><path d="M1.5 0 H17.5 L23.5 8.5 L17.5 18.5 H1.5 Z" fill="#7a90a6"/><rect x="18.3" y="7.5" width="2.4" height="2.6" fill="#ffffff"/><path d="M3 20.5 V16.8 Q0 14.5 0.3 10.8 Q0.8 4.6 7.2 4.6 Q12.8 4.6 13.8 9.5 L15.8 13 Q16 13.8 14.6 14 V16 Q14.3 17.5 12.5 17.2 H11.8 V20.5 Z" fill="#4d5f71" stroke="#ffffff" stroke-width="1.3"/><path d="M1.9 10.5 Q1.8 6.6 6 6.5 Q9.5 6.3 10.2 8.6 Q10.2 10.8 7.5 11 Q5.5 12.3 3.5 11.8 Q2 11.7 1.9 10.5 Z" fill="#ffffff"/></svg><div class="a t" style="left:235.10px;top:579.56px;font-size:18.6px;line-height:18.6px;color:#28313c;">float</div><div class="a t" style="left:666.30px;top:580.56px;font-size:18.6px;line-height:18.6px;color:#28313c;">0</div><div class="a" style="left:190.0px;top:619.0px;width:10px;height:1px;background:#e1e4e7;"></div><svg class="a" style="left:181.0px;top:612.0px;" width="8" height="15" viewBox="0 0 8 15"><path d="M0 0 L7.5 7.5 L0 15 Z" fill="#7d92a7"/></svg><svg class="a" style="left:203.5px;top:608.0px;" width="24" height="21" viewBox="0 0 24 21"><path d="M1.5 0 H17.5 L23.5 8.5 L17.5 18.5 H1.5 Z" fill="#7a90a6"/><rect x="18.3" y="7.5" width="2.4" height="2.6" fill="#ffffff"/><path d="M3 20.5 V16.8 Q0 14.5 0.3 10.8 Q0.8 4.6 7.2 4.6 Q12.8 4.6 13.8 9.5 L15.8 13 Q16 13.8 14.6 14 V16 Q14.3 17.5 12.5 17.2 H11.8 V20.5 Z" fill="#4d5f71" stroke="#ffffff" stroke-width="1.3"/><path d="M1.9 10.5 Q1.8 6.6 6 6.5 Q9.5 6.3 10.2 8.6 Q10.2 10.8 7.5 11 Q5.5 12.3 3.5 11.8 Q2 11.7 1.9 10.5 Z" fill="#ffffff"/></svg><div class="a t" style="left:234.10px;top:609.56px;font-size:18.6px;line-height:18.6px;color:#28313c;">int8</div><div class="a t" style="left:666.30px;top:610.56px;font-size:18.6px;line-height:18.6px;color:#28313c;">0</div><div class="a" style="left:190.0px;top:649.0px;width:10px;height:1px;background:#e1e4e7;"></div><svg class="a" style="left:181.0px;top:642.0px;" width="8" height="15" viewBox="0 0 8 15"><path d="M0 0 L7.5 7.5 L0 15 Z" fill="#7d92a7"/></svg><svg class="a" style="left:203.5px;top:638.0px;" width="24" height="21" viewBox="0 0 24 21"><path d="M1.5 0 H17.5 L23.5 8.5 L17.5 18.5 H1.5 Z" fill="#7a90a6"/><rect x="18.3" y="7.5" width="2.4" height="2.6" fill="#ffffff"/><path d="M3 20.5 V16.8 Q0 14.5 0.3 10.8 Q0.8 4.6 7.2 4.6 Q12.8 4.6 13.8 9.5 L15.8 13 Q16 13.8 14.6 14 V16 Q14.3 17.5 12.5 17.2 H11.8 V20.5 Z" fill="#4d5f71" stroke="#ffffff" stroke-width="1.3"/><path d="M1.9 10.5 Q1.8 6.6 6 6.5 Q9.5 6.3 10.2 8.6 Q10.2 10.8 7.5 11 Q5.5 12.3 3.5 11.8 Q2 11.7 1.9 10.5 Z" fill="#ffffff"/></svg><div class="a t" style="left:234.10px;top:639.56px;font-size:18.6px;line-height:18.6px;color:#28313c;">int16</div><div class="a t" style="left:666.30px;top:640.56px;font-size:18.6px;line-height:18.6px;color:#28313c;">0</div><div class="a" style="left:190.0px;top:679.0px;width:10px;height:1px;background:#e1e4e7;"></div><svg class="a" style="left:181.0px;top:672.0px;" width="8" height="15" viewBox="0 0 8 15"><path d="M0 0 L7.5 7.5 L0 15 Z" fill="#7d92a7"/></svg><svg class="a" style="left:203.5px;top:668.0px;" width="24" height="21" viewBox="0 0 24 21"><path d="M1.5 0 H17.5 L23.5 8.5 L17.5 18.5 H1.5 Z" fill="#7a90a6"/><rect x="18.3" y="7.5" width="2.4" height="2.6" fill="#ffffff"/><path d="M3 20.5 V16.8 Q0 14.5 0.3 10.8 Q0.8 4.6 7.2 4.6 Q12.8 4.6 13.8 9.5 L15.8 13 Q16 13.8 14.6 14 V16 Q14.3 17.5 12.5 17.2 H11.8 V20.5 Z" fill="#4d5f71" stroke="#ffffff" stroke-width="1.3"/><path d="M1.9 10.5 Q1.8 6.6 6 6.5 Q9.5 6.3 10.2 8.6 Q10.2 10.8 7.5 11 Q5.5 12.3 3.5 11.8 Q2 11.7 1.9 10.5 Z" fill="#ffffff"/></svg><div class="a t" style="left:234.10px;top:669.56px;font-size:18.6px;line-height:18.6px;color:#28313c;">int32</div><div class="a t" style="left:631.30px;top:670.56px;font-size:18.6px;line-height:18.6px;color:#28313c;letter-spacing:-0.297px;">2,397</div><div class="a" style="left:190.0px;top:709.0px;width:10px;height:1px;background:#ffffff;"></div><svg class="a" style="left:181.0px;top:702.0px;" width="8" height="15" viewBox="0 0 8 15"><path d="M0 0 L7.5 7.5 L0 15 Z" fill="#ffffff"/></svg><svg class="a" style="left:203.5px;top:698.0px;" width="24" height="21" viewBox="0 0 24 21"><path d="M1.5 0 H17.5 L23.5 8.5 L17.5 18.5 H1.5 Z" fill="#eaf4fc"/><rect x="18.3" y="7.5" width="2.4" height="2.6" fill="#45a5e5"/><path d="M3 20.5 V16.8 Q0 14.5 0.3 10.8 Q0.8 4.6 7.2 4.6 Q12.8 4.6 13.8 9.5 L15.8 13 Q16 13.8 14.6 14 V16 Q14.3 17.5 12.5 17.2 H11.8 V20.5 Z" fill="#ffffff" stroke="#45a5e5" stroke-width="1.3"/><path d="M1.9 10.5 Q1.8 6.6 6 6.5 Q9.5 6.3 10.2 8.6 Q10.2 10.8 7.5 11 Q5.5 12.3 3.5 11.8 Q2 11.7 1.9 10.5 Z" fill="#45a5e5"/></svg><div class="a t" style="left:235.10px;top:699.56px;font-size:18.6px;line-height:18.6px;color:#ffffff;">string</div><div class="a" style="left:190.0px;top:739.0px;width:10px;height:1px;background:#e1e4e7;"></div><svg class="a" style="left:181.0px;top:732.0px;" width="8" height="15" viewBox="0 0 8 15"><path d="M0 0 L7.5 7.5 L0 15 Z" fill="#7d92a7"/></svg><svg class="a" style="left:203.5px;top:728.0px;" width="24" height="21" viewBox="0 0 24 21"><path d="M1.5 0 H17.5 L23.5 8.5 L17.5 18.5 H1.5 Z" fill="#7a90a6"/><rect x="18.3" y="7.5" width="2.4" height="2.6" fill="#ffffff"/><path d="M3 20.5 V16.8 Q0 14.5 0.3 10.8 Q0.8 4.6 7.2 4.6 Q12.8 4.6 13.8 9.5 L15.8 13 Q16 13.8 14.6 14 V16 Q14.3 17.5 12.5 17.2 H11.8 V20.5 Z" fill="#4d5f71" stroke="#ffffff" stroke-width="1.3"/><path d="M1.9 10.5 Q1.8 6.6 6 6.5 Q9.5 6.3 10.2 8.6 Q10.2 10.8 7.5 11 Q5.5 12.3 3.5 11.8 Q2 11.7 1.9 10.5 Z" fill="#ffffff"/></svg><div class="a t" style="left:234.10px;top:729.56px;font-size:18.6px;line-height:18.6px;color:#28313c;">uint8</div><div class="a t" style="left:666.30px;top:730.56px;font-size:18.6px;line-height:18.6px;color:#28313c;">0</div><div class="a" style="left:190.0px;top:769.0px;width:10px;height:1px;background:#e1e4e7;"></div><svg class="a" style="left:181.0px;top:762.0px;" width="8" height="15" viewBox="0 0 8 15"><path d="M0 0 L7.5 7.5 L0 15 Z" fill="#7d92a7"/></svg><svg class="a" style="left:203.5px;top:758.0px;" width="24" height="21" viewBox="0 0 24 21"><path d="M1.5 0 H17.5 L23.5 8.5 L17.5 18.5 H1.5 Z" fill="#7a90a6"/><rect x="18.3" y="7.5" width="2.4" height="2.6" fill="#ffffff"/><path d="M3 20.5 V16.8 Q0 14.5 0.3 10.8 Q0.8 4.6 7.2 4.6 Q12.8 4.6 13.8 9.5 L15.8 13 Q16 13.8 14.6 14 V16 Q14.3 17.5 12.5 17.2 H11.8 V20.5 Z" fill="#4d5f71" stroke="#ffffff" stroke-width="1.3"/><path d="M1.9 10.5 Q1.8 6.6 6 6.5 Q9.5 6.3 10.2 8.6 Q10.2 10.8 7.5 11 Q5.5 12.3 3.5 11.8 Q2 11.7 1.9 10.5 Z" fill="#ffffff"/></svg><div class="a t" style="left:234.10px;top:759.56px;font-size:18.6px;line-height:18.6px;color:#28313c;">uint16</div><div class="a t" style="left:631.30px;top:760.56px;font-size:18.6px;line-height:18.6px;color:#28313c;letter-spacing:-0.297px;">2,397</div><div class="a" style="left:190.0px;top:799.0px;width:10px;height:1px;background:#e1e4e7;"></div><svg class="a" style="left:181.0px;top:792.0px;" width="8" height="15" viewBox="0 0 8 15"><path d="M0 0 L7.5 7.5 L0 15 Z" fill="#7d92a7"/></svg><svg class="a" style="left:203.5px;top:788.0px;" width="24" height="21" viewBox="0 0 24 21"><path d="M1.5 0 H17.5 L23.5 8.5 L17.5 18.5 H1.5 Z" fill="#7a90a6"/><rect x="18.3" y="7.5" width="2.4" height="2.6" fill="#ffffff"/><path d="M3 20.5 V16.8 Q0 14.5 0.3 10.8 Q0.8 4.6 7.2 4.6 Q12.8 4.6 13.8 9.5 L15.8 13 Q16 13.8 14.6 14 V16 Q14.3 17.5 12.5 17.2 H11.8 V20.5 Z" fill="#4d5f71" stroke="#ffffff" stroke-width="1.3"/><path d="M1.9 10.5 Q1.8 6.6 6 6.5 Q9.5 6.3 10.2 8.6 Q10.2 10.8 7.5 11 Q5.5 12.3 3.5 11.8 Q2 11.7 1.9 10.5 Z" fill="#ffffff"/></svg><div class="a t" style="left:234.10px;top:789.56px;font-size:18.6px;line-height:18.6px;color:#28313c;">uint32</div><div class="a t" style="left:666.30px;top:790.56px;font-size:18.6px;line-height:18.6px;color:#28313c;">0</div><div class="a" style="left:166.0px;top:829.0px;width:10px;height:1px;background:#e1e4e7;"></div><svg class="a" style="left:157.0px;top:822.0px;" width="8" height="15" viewBox="0 0 8 15"><path d="M0 0 L7.5 7.5 L0 15 Z" fill="#7d92a7"/></svg><svg class="a" style="left:182.0px;top:820.3px;" width="19" height="17" viewBox="0 0 19 17"><path d="M0 2.2 Q0 1.5 1 1.4 H5.5 Q6.5 0.2 8 0.2 H10.5 Q12 0.2 12.8 1.4 H18.5 V2.8 H0 Z" fill="#586a7c"/><rect x="0" y="4.4" width="18.5" height="12.2" fill="#586a7c"/></svg><div class="a t" style="left:210.10px;top:819.56px;font-size:18.6px;line-height:18.6px;color:#28313c;">Device Info</div><div class="a" style="left:94.0px;top:859.0px;width:10px;height:1px;background:#e1e4e7;"></div><svg class="a" style="left:85.0px;top:852.0px;" width="8" height="15" viewBox="0 0 8 15"><path d="M0 0 L7.5 7.5 L0 15 Z" fill="#7d92a7"/></svg><svg class="a" style="left:110.0px;top:850.3px;" width="19" height="17" viewBox="0 0 19 17"><path d="M0 2.2 Q0 1.5 1 1.4 H5.5 Q6.5 0.2 8 0.2 H10.5 Q12 0.2 12.8 1.4 H18.5 V2.8 H0 Z" fill="#586a7c"/><rect x="0" y="4.4" width="18.5" height="12.2" fill="#586a7c"/></svg><div class="a t" style="left:139.10px;top:849.56px;font-size:18.6px;line-height:18.6px;color:#28313c;">factory2</div><div class="a" style="left:94.0px;top:889.0px;width:10px;height:1px;background:#e1e4e7;"></div><svg class="a" style="left:85.0px;top:882.0px;" width="8" height="15" viewBox="0 0 8 15"><path d="M0 0 L7.5 7.5 L0 15 Z" fill="#7d92a7"/></svg><svg class="a" style="left:110.0px;top:880.3px;" width="19" height="17" viewBox="0 0 19 17"><path d="M0 2.2 Q0 1.5 1 1.4 H5.5 Q6.5 0.2 8 0.2 H10.5 Q12 0.2 12.8 1.4 H18.5 V2.8 H0 Z" fill="#586a7c"/><rect x="0" y="4.4" width="18.5" height="12.2" fill="#586a7c"/></svg><div class="a t" style="left:138.10px;top:879.56px;font-size:18.6px;line-height:18.6px;color:#28313c;">My MQTT Group</div><div class="a" style="left:70.0px;top:919.0px;width:10px;height:1px;background:#e1e4e7;"></div><svg class="a" style="left:61.0px;top:912.0px;" width="8" height="15" viewBox="0 0 8 15"><path d="M0 0 L7.5 7.5 L0 15 Z" fill="#7d92a7"/></svg><svg class="a" style="left:86.0px;top:910.3px;" width="19" height="17" viewBox="0 0 19 17"><path d="M0 2.2 Q0 1.5 1 1.4 H5.5 Q6.5 0.2 8 0.2 H10.5 Q12 0.2 12.8 1.4 H18.5 V2.8 H0 Z" fill="#586a7c"/><rect x="0" y="4.4" width="18.5" height="12.2" fill="#586a7c"/></svg><div class="a t" style="left:114.10px;top:909.56px;font-size:18.6px;line-height:18.6px;color:#28313c;">Engine Control</div><div class="a" style="left:70.0px;top:949.0px;width:10px;height:1px;background:#e1e4e7;"></div><svg class="a" style="left:61.0px;top:942.0px;" width="8" height="15" viewBox="0 0 8 15"><path d="M0 0 L7.5 7.5 L0 15 Z" fill="#7d92a7"/></svg><svg class="a" style="left:86.0px;top:940.3px;" width="19" height="17" viewBox="0 0 19 17"><path d="M0 2.2 Q0 1.5 1 1.4 H5.5 Q6.5 0.2 8 0.2 H10.5 Q12 0.2 12.8 1.4 H18.5 V2.8 H0 Z" fill="#586a7c"/><rect x="0" y="4.4" width="18.5" height="12.2" fill="#586a7c"/></svg><div class="a t" style="left:114.10px;top:939.56px;font-size:18.6px;line-height:18.6px;color:#28313c;">Engine Info</div><div class="a" style="left:306px;top:694px;width:377px;height:29.5px;background:#ffffff;box-sizing:border-box;border:2px solid #46b0cc;border-left:1.5px solid #6cc3d8;"></div><div class="a t" style="left:525.40px;top:701.56px;font-size:18.6px;line-height:18.6px;color:#28313c;letter-spacing:0.449px;">Hello,sparkplug!</div><div class="a" style="left:308px;top:719.6px;width:373px;height:2px;background:#ffffff;"></div><div class="a" style="left:306px;top:721.5px;width:377px;height:2px;background:#46b0cc;"></div><div class="a" style="left:664.8px;top:698.5px;width:1.2px;height:20px;background:#222;"></div><div class="a" style="left:709px;top:116px;width:9px;height:856px;background:#f8f9fa;"></div><div class="a" style="left:710px;top:526px;width:7px;height:2px;background:#b9bdc2;"></div><div class="a" style="left:710px;top:530px;width:7px;height:2px;background:#b9bdc2;"></div><div class="a" style="left:710px;top:534px;width:7px;height:2px;background:#b9bdc2;"></div><div class="a" style="left:710px;top:538px;width:7px;height:2px;background:#b9bdc2;"></div><div class="a" style="left:710px;top:542px;width:7px;height:2px;background:#b9bdc2;"></div><div class="a" style="left:710px;top:546px;width:7px;height:2px;background:#b9bdc2;"></div><div class="a" style="left:710px;top:550px;width:7px;height:2px;background:#b9bdc2;"></div><div class="a" style="left:710px;top:554px;width:7px;height:2px;background:#b9bdc2;"></div><div class="a" style="left:710px;top:558px;width:7px;height:2px;background:#b9bdc2;"></div><div class="a" style="left:718px;top:115px;width:1122px;height:858px;background:#f8f9fb;box-sizing:border-box;border-left:2px solid #c9ccd0;border-top:2px solid #c3c6ca;"></div><div class="a t" style="left:733.30px;top:163.87px;font-size:20px;line-height:20px;color:#262d36;font-weight:bold;letter-spacing:0.173px;">Vision Windows &amp; Templates</div><svg class="a" style="left:1430px;top:162.5px;" width="23" height="20" viewBox="0 0 23 20"><path d="M1.3 2.6 Q6.2 0.6 11.5 2.6 Q16.8 0.6 21.7 2.6 V16.8 H1.3 Z" fill="none" stroke="#56687a" stroke-width="2.5" stroke-linejoin="round"/><rect x="10.7" y="2.6" width="1.7" height="14" fill="#56687a"/><rect x="0" y="15.8" width="23" height="2.8" fill="#56687a"/><rect x="9.2" y="16.5" width="4.6" height="3" rx="1.3" fill="#56687a"/></svg><div class="a t" style="left:1461.20px;top:164.92px;font-size:19px;line-height:19px;color:#36404a;letter-spacing:-0.144px;">Learn More</div><div class="a" style="left:1586px;top:152px;width:221px;height:44px;background:linear-gradient(180deg,#ffffff,#f2f4f6);box-sizing:border-box;border:1px solid #bfc3c7;border-top:2px solid #b8bcc0;border-left:2px solid #c0c4c8;"></div><svg class="a" style="left:1613px;top:164px;" width="20" height="19" viewBox="0 0 20 19"><path d="M8.5 2 H3.5 Q1.3 2 1.3 4.2 V15.3 Q1.3 17.5 3.5 17.5 H14.6 Q16.8 17.5 16.8 15.3 V10.5" fill="none" stroke="#56687a" stroke-width="2.3"/><path d="M7.2 11.8 L17.2 1.8" stroke="#56687a" stroke-width="2.2"/><path d="M11.2 1.3 H17.9 V8" fill="none" stroke="#56687a" stroke-width="2.2"/></svg><div class="a t" style="left:1641.90px;top:164.72px;font-size:19px;line-height:19px;color:#6a7580;font-weight:bold;letter-spacing:-0.025px;">Gateway Status</div><div class="a" style="left:732px;top:244px;width:1074px;height:475px;background:#ffffff;box-sizing:border-box;border:2px solid #d6d8db;border-radius:5px;"></div><div class="a t" style="left:1163.10px;top:286.82px;font-size:20px;line-height:20px;color:#262d36;font-weight:bold;letter-spacing:0.318px;">Create a New Window</div><div class="a" style="left:1000.5px;top:348.8px;width:507.5px;height:36.8px;background:#ffffff;box-sizing:border-box;border:1px solid #cfd2d5;border-top:2px solid #c6c9cc;border-left:2px solid #c9ccce;"></div><div class="a t" style="left:1011.50px;top:358.62px;font-size:19px;line-height:19px;color:#9b9fa4;letter-spacing:0.181px;">Name of the window</div><div class="a" style="left:976.5px;top:423.5px;width:178px;height:178px;background:#dde3e9;box-sizing:border-box;border:2px solid #b2b8be;border-radius:6px;"></div><svg class="a" style="left:1049.5px;top:462.5px;" width="33" height="33" viewBox="0 0 33 33"><rect x="1.5" y="1.5" width="30" height="30" rx="3" fill="#e4e9ee" stroke="#56687a" stroke-width="3"/><rect x="2" y="2" width="29" height="4.5" fill="#56687a"/><rect x="3.3" y="2.3" width="2.8" height="2.6" fill="#f4f7fa"/><rect x="7.4" y="2.3" width="2.8" height="2.6" fill="#f4f7fa"/></svg><svg class="a" style="left:1253.5px;top:463px;" width="33" height="33" viewBox="0 0 33 33"><rect x="1.5" y="1.5" width="30" height="30" rx="3" fill="none" stroke="#56687a" stroke-width="3"/><rect x="6.5" y="7.5" width="13" height="11" fill="#7d95ad"/><rect x="10.5" y="11.5" width="15" height="12" fill="#fff" stroke="#56687a" stroke-width="3"/></svg><svg class="a" style="left:1457.5px;top:463px;" width="33" height="33" viewBox="0 0 33 33"><rect x="1.5" y="1.5" width="30" height="30" rx="3" fill="none" stroke="#56687a" stroke-width="3"/><rect x="3" y="3" width="27" height="11.5" fill="#7d95ad"/></svg><div class="a t" style="left:1008.40px;top:521.52px;font-size:19px;line-height:19px;color:#2c3540;letter-spacing:0.198px;">Main Window</div><div class="a t" style="left:1206.00px;top:522.22px;font-size:19px;line-height:19px;color:#2c3540;letter-spacing:0.039px;">Popup Window</div><div class="a t" style="left:1404.80px;top:522.22px;font-size:19px;line-height:19px;color:#2c3540;letter-spacing:0.020px;">Docked Window</div><div class="a" style="left:1216px;top:638px;width:108px;height:44px;background:#f7f8fa;box-sizing:border-box;border:1px solid #dcdfe2;border-top:2px solid #d9dcdf;border-left:2px solid #dcdfe2;"></div><div class="a t" style="left:1240.80px;top:650.92px;font-size:19px;line-height:19px;color:#a3adb6;font-weight:bold;letter-spacing:-0.035px;">Create</div><div class="a" style="left:732px;top:910px;width:1074px;height:30px;background:#ffffff;box-sizing:border-box;border:2px solid #d6d8db;border-bottom:none;border-radius:5px 5px 0 0;"></div><div class="a" style="left:1819px;top:117px;width:21px;height:855px;background:#f8f9fa;"></div><div class="a" style="left:1819px;top:137px;width:18px;height:508px;background:#c1c5c9;"></div><div class="a" style="left:1819px;top:645px;width:1px;height:290px;background:#c4c8cc;"></div><div class="a" style="left:1837px;top:117px;width:1px;height:818px;background:#dfe2e5;"></div><div class="a" style="left:1838px;top:117px;width:2px;height:853px;background:#bfc3c7;"></div><div class="a" style="left:1819.5px;top:117px;width:16px;height:20px;background:#ffffff;"></div><svg class="a" style="left:1824.5px;top:127px;" width="9" height="5" viewBox="0 0 9 5"><path d="M0.8 4.2 L4.5 0.8 L8.2 4.2" fill="none" stroke="#444" stroke-width="1.5"/></svg><svg class="a" style="left:1824.5px;top:922.5px;" width="9" height="5" viewBox="0 0 9 5"><path d="M0.8 0.8 L4.5 4.2 L8.2 0.8" fill="none" stroke="#444" stroke-width="1.5"/></svg><div class="a" style="left:1825px;top:377px;width:6px;height:1.6px;background:#ffffff;"></div><div class="a" style="left:1825px;top:380px;width:6px;height:1.6px;background:#ffffff;"></div><div class="a" style="left:1825px;top:383px;width:6px;height:1.6px;background:#ffffff;"></div><div class="a" style="left:1825px;top:386px;width:6px;height:1.6px;background:#ffffff;"></div><div class="a" style="left:1825px;top:389px;width:6px;height:1.6px;background:#ffffff;"></div><div class="a" style="left:1825px;top:392px;width:6px;height:1.6px;background:#ffffff;"></div><div class="a" style="left:1825px;top:395px;width:6px;height:1.6px;background:#ffffff;"></div><div class="a" style="left:1825px;top:398px;width:6px;height:1.6px;background:#ffffff;"></div><div class="a" style="left:1825px;top:401px;width:6px;height:1.6px;background:#ffffff;"></div><div class="a" style="left:720px;top:934px;width:1118px;height:1px;background:#d0d3d6;"></div><div class="a" style="left:720px;top:935px;width:1118px;height:36px;background:#d9dcdf;"></div><div class="a" style="left:720px;top:935px;width:4px;height:36px;background:#d0d3d6;"></div><div class="a" style="left:724px;top:935px;width:47px;height:29px;background:#ffffff;"></div><div class="a" style="left:724px;top:963.5px;width:47px;height:5px;background:#46a6e6;"></div><svg class="a" style="left:736px;top:942px;" width="21" height="21" viewBox="0 0 21 21"><path d="M1.2 5.5 V1.2 H5.5 M15.5 1.2 H19.8 V5.5 M19.8 15.5 V19.8 H15.5 M5.5 19.8 H1.2 V15.5" fill="none" stroke="#f08a24" stroke-width="2.4"/><ellipse cx="10.5" cy="10.5" rx="8.2" ry="7.2" fill="none" stroke="#34495c" stroke-width="2.6"/><circle cx="10.5" cy="10.5" r="2.9" fill="#f5821f"/></svg><div class="a" style="left:1840px;top:116px;width:80px;height:858px;background:#f8f9fa;"></div><div class="a" style="left:1843px;top:117px;width:35px;height:173px;background:#f8f9fa;box-sizing:border-box;border-left:1px solid #c2c6ca;border-bottom:1px solid #9ea3a8;border-top:1px solid #c2c6ca;"></div><svg class="a" style="left:1850px;top:124px;" width="19" height="19" viewBox="0 0 19 19"><path d="M0.6 8.6 A8.9 8.9 0 1 1 9.8 17.9 Q7.6 17.6 7.6 15 Q7.6 11.6 4.6 10.8 Q2.2 10.4 0.6 8.6 Z" fill="#56687a"/><circle cx="11" cy="3.6" r="1.5" fill="#f8f9fa"/><circle cx="15" cy="7" r="1.5" fill="#f8f9fa"/><circle cx="15" cy="11.4" r="1.5" fill="#f8f9fa"/><circle cx="11" cy="14.6" r="1.5" fill="#f8f9fa"/></svg><div class="a t" style="transform-origin:0 0;transform:rotate(90deg);left:1869.88px;top:156.80px;font-size:19px;line-height:19px;color:#555e68;font-weight:bold;letter-spacing:-0.393px;">Components</div><div class="a" style="left:1880px;top:116px;width:40px;height:858px;background:#f8f9fa;"></div><div class="a" style="left:1918px;top:116px;width:1.5px;height:858px;background:#d7dadd;"></div><div class="a" style="left:1883px;top:115px;width:34px;height:1.5px;background:#c9ccd0;"></div><div class="a" style="left:1883px;top:127.5px;width:34px;height:1.5px;background:#c9ccd0;"></div><div class="a" style="left:1895px;top:119px;width:1.2px;height:5px;background:#b0b5ba;"></div><div class="a" style="left:1898.5px;top:119px;width:1.2px;height:5px;background:#b0b5ba;"></div><div class="a" style="left:1902px;top:119px;width:1.2px;height:5px;background:#b0b5ba;"></div><div class="a" style="left:1879.5px;top:130.5px;width:40.5px;height:41.5px;background:#dde3e8;box-sizing:border-box;border:1px solid #b8bfc6;border-top:2px solid #adb5bc;"></div><div class="a" style="left:1880px;top:175px;width:40px;height:1px;background:#b0b5ba;"></div><svg class="a" style="left:1892.5px;top:143.5px;" width="16" height="17" viewBox="0 0 16 17"><path d="M0.5 0.5 L15.8 6.5 L9 8.8 L6.8 16.5 Z" fill="#56687a"/></svg><svg class="a" style="left:1892px;top:193px;" width="16" height="19" viewBox="0 0 16 19"><path d="M1 1 H15 V13 H1 Z" fill="none" stroke="#56687a" stroke-width="1.6"/><rect x="5.5" y="11.5" width="5" height="5" fill="#f8f9fa" stroke="#56687a" stroke-width="1.5"/></svg><svg class="a" style="left:1891px;top:233px;" width="18" height="20" viewBox="0 0 18 20"><circle cx="9" cy="8" r="7.5" fill="none" stroke="#56687a" stroke-width="1.6"/><rect x="6.5" y="13.5" width="5" height="5" fill="#f8f9fa" stroke="#56687a" stroke-width="1.5"/></svg><svg class="a" style="left:1891px;top:276px;" width="18" height="19" viewBox="0 0 18 19"><path d="M9 1 L17 13.5 H1 Z" fill="none" stroke="#56687a" stroke-width="1.6"/><rect x="6.5" y="12.5" width="5" height="5" fill="#f8f9fa" stroke="#56687a" stroke-width="1.5"/></svg><svg class="a" style="left:1891px;top:320px;" width="19" height="15" viewBox="0 0 19 15"><path d="M1 4.5 H10 V0.8 L17.5 7.5 L10 14.2 V10.5 H1 Z" fill="none" stroke="#56687a" stroke-width="1.6"/></svg><svg class="a" style="left:1891px;top:359px;" width="19" height="20" viewBox="0 0 19 20"><path d="M3 13.5 L13.5 3 L16.5 6 L6 16.5 Z" fill="none" stroke="#56687a" stroke-width="1.6"/><path d="M14.5 2 L16 0.5 L19 3.5 L17.5 5 Z" fill="#56687a"/><path d="M1 19 L2.5 13.5 L6 17 Z" fill="#56687a"/></svg><svg class="a" style="left:1890px;top:400px;" width="21" height="21" viewBox="0 0 21 21"><path d="M1 20 L4 10 L11 6 L15 10 L11 17 Z" fill="#56687a"/><path d="M12 5 L16 1 L20 5 L16 9 Z" fill="#56687a"/><circle cx="8.5" cy="12.5" r="1.5" fill="#f8f9fa"/><path d="M1.5 19.5 L8 13" stroke="#f8f9fa" stroke-width="0.9"/></svg><div class="a" style="left:1880px;top:434px;width:40px;height:1px;background:#9ea3a8;"></div><svg class="a" style="left:1891px;top:450px;" width="19" height="19" viewBox="0 0 19 19"><rect x="0.8" y="12.8" width="5.5" height="5.5" fill="none" stroke="#56687a" stroke-width="1.5"/><rect x="12.8" y="0.8" width="5.5" height="5.5" fill="none" stroke="#56687a" stroke-width="1.5"/><path d="M5.5 13.5 L13.5 5.5" stroke="#56687a" stroke-width="1.5"/></svg><svg class="a" style="left:1891px;top:492px;" width="19" height="19" viewBox="0 0 19 19"><rect x="0" y="0" width="18.5" height="18.5" fill="#56687a"/><rect x="1.5" y="1.5" width="15.5" height="5" fill="#56687a"/><rect x="1.5" y="8" width="1.5" height="1.5" fill="#f8f9fa"/><rect x="3.0" y="11" width="1.5" height="1.5" fill="#f8f9fa"/><rect x="1.5" y="14" width="1.5" height="1.5" fill="#f8f9fa"/><rect x="4.5" y="8" width="1.5" height="1.5" fill="#f8f9fa"/><rect x="6.0" y="11" width="1.5" height="1.5" fill="#f8f9fa"/><rect x="4.5" y="14" width="1.5" height="1.5" fill="#f8f9fa"/><rect x="7.5" y="8" width="1.5" height="1.5" fill="#f8f9fa"/><rect x="9.0" y="11" width="1.5" height="1.5" fill="#f8f9fa"/><rect x="7.5" y="14" width="1.5" height="1.5" fill="#f8f9fa"/><rect x="10.5" y="8" width="1.5" height="1.5" fill="#f8f9fa"/><rect x="12.0" y="11" width="1.5" height="1.5" fill="#f8f9fa"/><rect x="10.5" y="14" width="1.5" height="1.5" fill="#f8f9fa"/><rect x="13.5" y="8" width="1.5" height="1.5" fill="#f8f9fa"/><rect x="15.0" y="11" width="1.5" height="1.5" fill="#f8f9fa"/><rect x="13.5" y="14" width="1.5" height="1.5" fill="#f8f9fa"/></svg><svg class="a" style="left:1891px;top:534px;" width="19" height="20" viewBox="0 0 19 20"><path d="M1 19 L2 15 L11 6 L14 9 L5 18 Z" fill="none" stroke="#56687a" stroke-width="1.7"/><path d="M10 4 L15 0.5 Q19 0.5 18.5 4.5 L15 9.5 Z" fill="#56687a"/></svg><div class="a" style="left:0px;top:972px;width:1920px;height:2px;background:#bdc1c5;"></div><div class="a" style="left:0px;top:974px;width:1920px;height:46px;background:#f8f9fa;"></div><svg class="a" style="left:10px;top:988px;" width="22" height="22" viewBox="0 0 22 22"><rect x="0" y="0" width="9" height="9" fill="#5f6469"/><rect x="0" y="12" width="9" height="9" fill="#5f6469"/><rect x="12" y="0" width="9" height="9" fill="#5f6469"/><rect x="12" y="12" width="9" height="9" fill="#5f6469"/></svg><div class="a" style="left:1663.5px;top:977px;width:1px;height:40px;background:#b8bcc0;"></div><div class="a" style="left:1705.5px;top:977px;width:1px;height:40px;background:#b8bcc0;"></div><div class="a" style="left:1747.5px;top:977px;width:1px;height:40px;background:#b8bcc0;"></div><div class="a" style="left:1882.5px;top:977px;width:1px;height:40px;background:#b8bcc0;"></div><div class="a t" style="left:1671.00px;top:989.72px;font-size:19px;line-height:19px;color:#2c3540;letter-spacing:-0.565px;">(-,-)</div><div class="a t" style="left:1714.00px;top:989.72px;font-size:19px;line-height:19px;color:#2c3540;letter-spacing:1.200px;">--%</div><div class="a t" style="left:1756.00px;top:989.72px;font-size:19px;line-height:19px;color:#2c3540;letter-spacing:-0.159px;">221 / 1024 mb</div><svg class="a" style="left:1892px;top:987px;" width="22" height="23" viewBox="0 0 22 23"><rect x="1.5" y="5.8" width="7.3" height="3.8" rx="1.9" fill="#e6e9ec" stroke="#4d5b69" stroke-width="1.5"/><rect x="1.5" y="12" width="16.6" height="3.6" rx="1.8" fill="#e6e9ec" stroke="#4d5b69" stroke-width="1.5"/><rect x="1.5" y="18" width="16.6" height="3.6" rx="1.8" fill="#dfe3e7" stroke="#4d5b69" stroke-width="1.5"/><path d="M10.5 6.8 L13.2 9.8 L20.5 2" fill="none" stroke="#ffffff" stroke-width="4.5"/><path d="M10.5 6.8 L13.2 9.8 L20.5 2" fill="none" stroke="#23995b" stroke-width="2.8"/></svg></body></html>
